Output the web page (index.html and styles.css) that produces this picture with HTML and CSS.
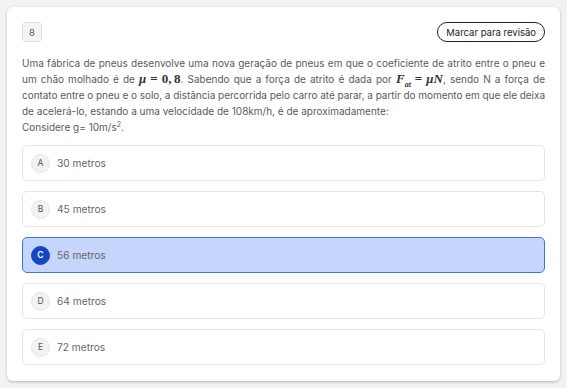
FILE: index.html
```html
<!DOCTYPE html>
<html lang="pt">
<head>
<meta charset="utf-8">
<link rel="stylesheet" href="styles.css">
</head>
<body>
<div class="card">
  <div class="head">
    <span class="num">8</span>
    <button class="mark">Marcar para revisão</button>
  </div>
  <p class="stem">
    <span class="ln">Uma fábrica de pneus desenvolve uma nova geração de pneus em que o coeficiente de atrito entre o pneu e</span>
    <span class="ln">um chão molhado é de <span class="m">μ</span><span class="mr rel">=</span><span class="mr">0,&thinsp;8</span>. Sabendo que a força de atrito é dada por <span class="m">F<sub>at</sub></span><span class="mr rel">=</span><span class="m">μN</span>, sendo N a força de</span>
    <span class="ln tight">contato entre o pneu e o solo, a distância percorrida pelo carro até parar, a partir do momento em que ele deixa</span>
    <span class="ln last">de acelerá-lo, estando a uma velocidade de 108km/h, é de aproximadamente:</span>
    <span class="ln last">Considere g= 10m/s<sup>2</sup>.</span>
  </p>
  <div class="opts">
    <div class="opt"><span class="let">A</span><span>30 metros</span></div>
    <div class="opt"><span class="let">B</span><span>45 metros</span></div>
    <div class="opt sel"><span class="let">C</span><span>56 metros</span></div>
    <div class="opt"><span class="let">D</span><span>64 metros</span></div>
    <div class="opt"><span class="let">E</span><span>72 metros</span></div>
  </div>
</div>
</body>
</html>
```
FILE: styles.css
```css
html, body { margin: 0; padding: 0; }
body {
  background: #f2f2f2;
  font-family: Inter, "Noto Sans", sans-serif;
  width: 567px; height: 388px; overflow: hidden;
}
.card {
  margin: 7px 0 0 7px;
  width: 553px;
  height: 374px;
  box-sizing: border-box;
  background: #fff;
  border-radius: 6px;
  box-shadow: 0 1px 3px rgba(0,0,0,0.25);
  padding: 15px 15px 0 15px;
}
.head { display: flex; justify-content: space-between; align-items: center; height: 20px; }
.num {
  width: 20px; height: 20px; box-sizing: border-box;
  display: flex; align-items: center; justify-content: center;
  background: #f4f4f4; border: 1px solid #e2e2e2; border-radius: 4px;
  font-size: 9.5px; color: #555;
}
.mark {
  height: 20px; box-sizing: border-box;
  border: 1px solid #222; border-radius: 10px; background: #fff;
  font-family: Inter, sans-serif; font-size: 9.5px; color: #222;
  padding: 0 8px;
}
.stem {
  margin: 13px 0 0 0;
  font-size: 10px; line-height: 16px; color: #5a5a5a;
}
.ln { display: block; white-space: nowrap; text-align: justify; text-align-last: justify; }
.ln.tight { letter-spacing: -0.04px; }
.ln.last { text-align: left; text-align-last: left; }
.m, .mr { font-family: "Liberation Serif", serif; font-weight: bold; font-size: 13px; color: #333; line-height: 0; }
.m { font-style: italic; }
.rel { margin: 0 4px; }
.m sub { font-size: 8px; line-height: 0; }
sup { font-size: 7px; line-height: 0; }
.opts { margin-top: 10px; display: flex; flex-direction: column; gap: 10px; }
.opt {
  height: 36px; box-sizing: border-box;
  border: 1px solid #e4e4e4; border-radius: 5px;
  display: flex; align-items: center; gap: 7px;
  padding-left: 8px;
  font-size: 10.2px; color: #666;
}
.let {
  width: 19px; height: 19px; border-radius: 50%;
  background: #f2f2f2; border: 1px solid #e6e6e6; box-sizing: border-box;
  display: flex; align-items: center; justify-content: center;
  font-size: 8.5px; color: #555;
}
.sel { background: #c5d5fb; border-color: #4472d8; }
.sel .let { background: #1546c2; border-color: #1546c2; color: #fff; font-weight: 600; }
```
